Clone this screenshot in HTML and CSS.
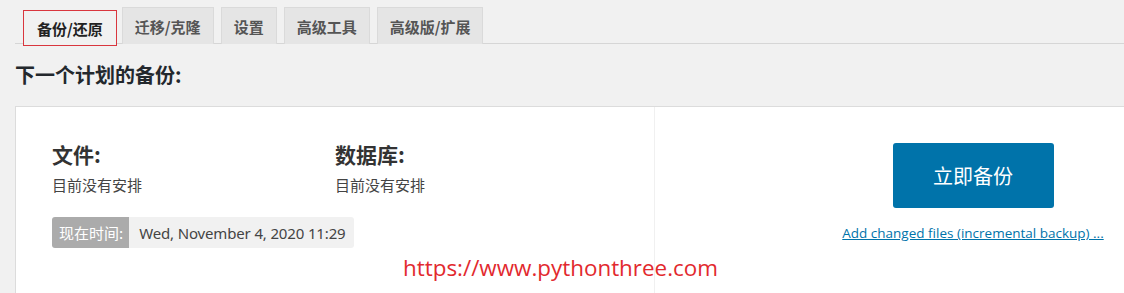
FILE: index.html
```html
<!DOCTYPE html>
<html lang="zh-CN">
<head>
<meta charset="utf-8">
<title>备份/还原</title>
<link rel="stylesheet" href="styles.css">
</head>
<body>
<div class="wrap">
  <nav class="tabs">
    <a class="tab active">备份/还原</a>
    <a class="tab">迁移/克隆</a>
    <a class="tab">设置</a>
    <a class="tab">高级工具</a>
    <a class="tab">高级版/扩展</a>
  </nav>
  <h2 class="title">下一个计划的备份:</h2>
  <div class="card">
    <div class="left">
      <div class="sched">
        <div class="item">
          <h3 class="item-h">文件:</h3>
          <p class="item-p">目前没有安排</p>
        </div>
        <div class="item">
          <h3 class="item-h">数据库:</h3>
          <p class="item-p">目前没有安排</p>
        </div>
      </div>
      <div class="time">
        <span class="time-label">现在时间:</span>
        <span class="time-value">Wed, November 4, 2020 11:29</span>
      </div>
    </div>
    <div class="right">
      <button class="backup-btn">立即备份</button>
      <a class="inc-link">Add changed files (incremental backup) ...</a>
    </div>
  </div>
</div>
<div class="watermark">https://www.pythonthree.com</div>
</body>
</html>
```
FILE: styles.css
```css
html, body {
  margin: 0;
  padding: 0;
}
body {
  background: #f1f1f1;
  overflow: hidden;
  width: 1124px;
  height: 293px;
  position: relative;
  font-family: "Noto Sans", "Noto Sans CJK SC", sans-serif;
  color: #23282d;
}
.wrap {
  padding-left: 15px;
}
.tabs {
  display: flex;
  gap: 7px;
  padding: 7px 0 0 8px;
  border-bottom: 1px solid #d6d6d6;
  height: 36px;
}
.tab {
  box-sizing: border-box;
  height: 37px;
  padding: 0 12px;
  display: flex;
  align-items: center;
  background: #e5e5e5;
  border: 1px solid #dadada;
  border-bottom: none;
  font-family: "Noto Sans CJK SC", sans-serif;
  font-weight: 700;
  font-size: 15px;
  color: #555;
  cursor: pointer;
}
.tab.active {
  background: #f1f1f1;
  color: #222;
  border: 1px solid #d9363e;
  height: 36px;
  margin-top: 3px;
  margin-right: -2px;
  padding: 0 13px;
}
.title {
  margin: 17px 0 0 0;
  font-family: "Noto Sans CJK SC", sans-serif;
  font-size: 20px;
  font-weight: 700;
  line-height: 28px;
  color: #23282d;
}
.card {
  box-sizing: border-box;
  margin-top: 17px;
  width: 1277px;
  height: 220px;
  background: #fff;
  border: 1px solid #dcdcdc;
  display: grid;
  grid-template-columns: 639px 1fr;
}
.left {
  padding: 34px 0 0 36px;
  border-right: 1px solid #f0f0f0;
}
.sched {
  display: flex;
}
.item {
  width: 283px;
}
.item-h {
  margin: 0;
  font-family: "Noto Sans CJK SC", sans-serif;
  font-size: 21px;
  line-height: 27px;
  font-weight: 700;
  color: #333;
}
.item-p {
  margin: 7px 0 0 0;
  font-family: "Noto Sans CJK SC", sans-serif;
  font-size: 15px;
  line-height: 20px;
  color: #444;
}
.time {
  display: inline-flex;
  margin-top: 22px;
  height: 31px;
  border-radius: 3px;
  overflow: hidden;
  font-size: 15px;
}
.time-label {
  display: flex;
  align-items: center;
  padding: 0 6px 0 7px;
  background: #ababab;
  color: #fff;
  font-family: "Noto Sans CJK SC", sans-serif;
}
.time-value {
  display: flex;
  align-items: center;
  padding: 0 8px 0 10px;
  background: #f1f1f1;
  color: #444;
  font-family: "Noto Sans", sans-serif;
  letter-spacing: -0.15px;
}
.right {
  display: flex;
  flex-direction: column;
  align-items: center;
  padding-top: 36px;
}
.backup-btn {
  width: 161px;
  height: 65px;
  border: none;
  border-radius: 3px;
  background: #0073aa;
  color: #fff;
  font-family: "Noto Sans CJK SC", sans-serif;
  font-size: 20px;
  cursor: pointer;
}
.inc-link {
  margin-top: 16px;
  font-family: "Open Sans", sans-serif;
  font-size: 13.5px;
  line-height: 18px;
  color: #0073aa;
  text-decoration: underline;
  cursor: pointer;
}
.watermark {
  position: absolute;
  left: 403px;
  top: 252px;
  font-family: "Open Sans", sans-serif;
  font-size: 22.4px;
  line-height: 32px;
  color: #e2292e;
}
```
